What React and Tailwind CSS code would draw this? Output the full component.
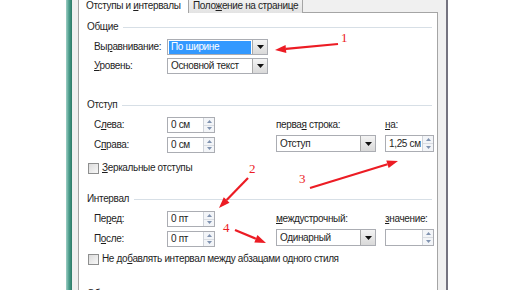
import React from 'react';

const font = { fontFamily: '"Liberation Sans", Arial, sans-serif', letterSpacing: '-0.35px' };

function Arrow({ x1, y1, x2, y2 }) {
  const a = Math.atan2(y2 - y1, x2 - x1);
  const len = 11;
  const w = 4;
  const bx = x2 - len * Math.cos(a);
  const by = y2 - len * Math.sin(a);
  const px = -Math.sin(a) * w;
  const py = Math.cos(a) * w;
  return (
    <g>
      <line x1={x1} y1={y1} x2={bx} y2={by} stroke="#ec1c24" strokeWidth="2.2" />
      <polygon points={`${x2},${y2} ${bx + px},${by + py} ${bx - px},${by - py}`} fill="#ec1c24" />
    </g>
  );
}

function Header({ title }) {
  return (
    <div className="flex items-center h-[14px] pl-[8px] pr-[5px]">
      <span>{title}</span>
      <div className="flex-1 h-px bg-[#d7dfe6] ml-[5px]" />
    </div>
  );
}

function DropBtn() {
  return (
    <div className="w-[15px] h-full border-l border-[#a9a9a9] bg-gradient-to-b from-[#f4f4f4] to-[#d9d9d9] flex items-center justify-center">
      <svg width="7" height="4" viewBox="0 0 7 4"><polygon points="0,0 7,0 3.5,4" fill="#111" /></svg>
    </div>
  );
}

function Select({ value, width, selected, h = 'h-[16px]' }) {
  return (
    <div className={`flex ${h} border border-[#abadb3] bg-white`} style={{ width }}>
      <div className="flex-1 flex items-center px-[1px]">
        <div className={`flex-1 h-[13px] flex items-center pl-[2px] whitespace-nowrap ${selected ? 'bg-[#3399ff] text-white' : ''}`}>{value}</div>
      </div>
      <DropBtn />
    </div>
  );
}

function Spin({ value, width = 48, h = 'h-[16px]' }) {
  return (
    <div className={`flex ${h} border border-[#abadb3] bg-white`} style={{ width }}>
      <div className="flex-1 flex items-center pl-[3px] whitespace-nowrap">{value}</div>
      <div className="w-[11px] h-full border-l border-[#d0d4da] flex flex-col">
        <div className="flex-1 flex items-center justify-center border-b border-[#d8dce2] bg-[#f3f5f8]">
          <svg width="5" height="3" viewBox="0 0 5 3"><polygon points="0,3 5,3 2.5,0" fill="#8093b0" /></svg>
        </div>
        <div className="flex-1 flex items-center justify-center bg-[#f3f5f8]">
          <svg width="5" height="3" viewBox="0 0 5 3"><polygon points="0,0 5,0 2.5,3" fill="#8093b0" /></svg>
        </div>
      </div>
    </div>
  );
}

function Row({ label, children, mt }) {
  return (
    <div className={`flex items-center ${mt}`}>
      <div className="w-[73px] whitespace-nowrap">{label}</div>
      {children}
    </div>
  );
}

function Check({ children, mt }) {
  return (
    <div className={`flex items-center pl-[9px] ${mt}`}>
      <div className="w-[11px] h-[11px] border border-[#8e8f8f] bg-gradient-to-br from-[#dcdcdc] to-[#f8f8f8]" />
      <span className="ml-[3px] whitespace-nowrap">{children}</span>
    </div>
  );
}

export default function App() {
  return (
    <div className="relative w-[516px] h-[290px] overflow-hidden bg-white flex text-[10px] leading-[14px] text-[#1e1e1e]" style={font}>
      <div className="w-[66px] bg-white" />
      <div className="w-[6px] bg-gradient-to-r from-[#9fcfc6] via-[#4a9d8c] to-[#2c7a66]" />
      <div className="w-[374px] bg-[#f0f0f0] flex flex-col pl-[6px] pr-[8px]">
        <div className="flex h-[13px] shrink-0 items-end">
          <div className="w-[110px] h-[13px] bg-white border-l border-[#a5a5a5] pl-[7px] leading-[12px] whitespace-nowrap">
            Отступы и <u>и</u>нтервалы
          </div>
          <div className="w-[115px] h-[13px] border border-t-0 border-b-0 border-[#a5a5a5] bg-gradient-to-b from-[#f2f2f2] to-[#e3e3e3] pl-[4px] leading-[12px] whitespace-nowrap">
            Поло<u>ж</u>ение на странице
          </div>
          <div className="flex-1 h-px bg-[#a5a5a5]" />
        </div>
        <div className="flex-1 bg-white border-l border-r border-[#a5a5a5] pt-[7px]">
          <Header title="Общие" />
          <div className="pl-[15px]">
            <Row label={<>Вы<u>р</u>авнивание:</>} mt="mt-[5px]">
              <Select value="По ширине" width={101} selected />
            </Row>
            <Row label={<><u>У</u>ровень:</>} mt="mt-[3px]">
              <Select value="Основной текст" width={101} />
            </Row>
          </div>
          <div className="mt-[24px]">
            <Header title="Отступ" />
          </div>
          <div className="flex pl-[15px]">
            <div className="w-[182px]">
              <Row label={<>С<u>л</u>ева:</>} mt="mt-[5px]">
                <Spin value="0 см" />
              </Row>
              <Row label={<>С<u>п</u>рава:</>} mt="mt-[4px]">
                <Spin value="0 см" />
              </Row>
            </div>
            <div className="flex">
              <div className="w-[109px]">
                <div className="mt-[6px] h-[14px] whitespace-nowrap">перва<u>я</u> строка:</div>
                <div className="mt-[3px]">
                  <Select value="Отступ" width={100} h="h-[17px]" />
                </div>
              </div>
              <div>
                <div className="mt-[6px] h-[14px]"><u>н</u>а:</div>
                <div className="mt-[3px]">
                  <Spin value="1,25 см" width={49} h="h-[17px]" />
                </div>
              </div>
            </div>
          </div>
          <Check mt="mt-[8px]"><u>З</u>еркальные отступы</Check>
          <div className="mt-[17px]">
            <Header title="Интервал" />
          </div>
          <div className="flex pl-[15px]">
            <div className="w-[182px]">
              <Row label={<>Пе<u>р</u>ед:</>} mt="mt-[5px]">
                <Spin value="0 пт" />
              </Row>
              <Row label={<>П<u>о</u>сле:</>} mt="mt-[4px]">
                <Spin value="0 пт" />
              </Row>
            </div>
            <div className="flex">
              <div className="w-[109px]">
                <div className="mt-[6px] h-[14px] whitespace-nowrap"><u>м</u>еждустрочный:</div>
                <div className="mt-[3px]">
                  <Select value="Одинарный" width={100} h="h-[17px]" />
                </div>
              </div>
              <div>
                <div className="mt-[6px] h-[14px] whitespace-nowrap"><u>з</u>начение:</div>
                <div className="mt-[3px]">
                  <Spin value="" width={49} h="h-[17px]" />
                </div>
              </div>
            </div>
          </div>
          <Check mt="mt-[5px]">Не до<u>б</u>авлять интервал между абзацами одного стиля</Check>
          <div className="mt-[21px]">
            <Header title="Образец" />
          </div>
        </div>
      </div>
      <div className="w-[2px] bg-[#74737f]" />
      <div className="flex-1 bg-white" />
      <svg className="absolute inset-0" width="516" height="290">
        <Arrow x1={338} y1={44} x2={275} y2={50} />
        <Arrow x1={248} y1={178} x2={219} y2={208} />
        <Arrow x1={310} y1={188} x2={398} y2={161} />
        <Arrow x1={235} y1={230} x2={266} y2={243} />
        <g fill="#ec1c24" fontFamily='"Liberation Serif", serif' fontSize="13">
          <text x="341" y="42">1</text>
          <text x="249" y="173">2</text>
          <text x="299" y="183">3</text>
          <text x="223" y="232">4</text>
        </g>
      </svg>
    </div>
  );
}
